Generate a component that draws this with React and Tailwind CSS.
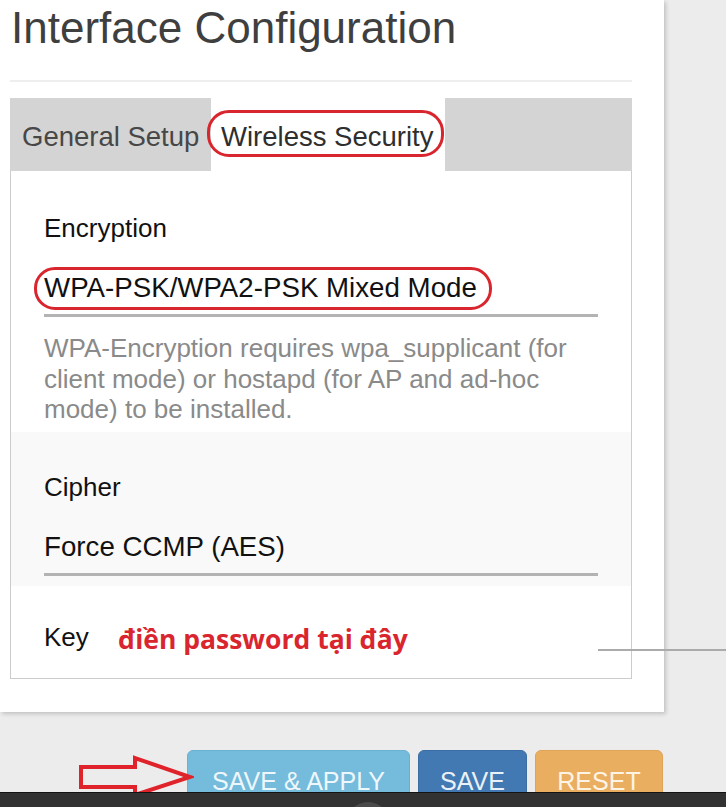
import React from "react";

export default function App() {
  return (
    <div
      className="relative w-[726px] h-[807px] overflow-hidden bg-[#ececec]"
      style={{ fontFamily: '"Liberation Sans", Arial, sans-serif' }}
    >
      {/* Card */}
      <div className="w-[664px] h-[712px] bg-white shadow-[2px_2px_4px_rgba(0,0,0,0.18)] pl-[10px] pt-[6px]">
        <h2 className="text-[44px] leading-[44px] text-[#3f3f3f] pl-[1px]">Interface Configuration</h2>
        <div className="mt-[30px] w-[622px] h-[2px] bg-[#eeeeee]" />

        <div className="mt-[16px] w-[622px]">
          {/* Tabs */}
          <div className="flex h-[73px] bg-[#d4d4d4] text-[27.5px] leading-[32px]">
            <div className="w-[201px] pl-[12px] pt-[23px] text-[#474747] whitespace-nowrap">General Setup</div>
            <div className="relative w-[234px] bg-white pl-[10px] pt-[23px] text-[#2e2e2e] whitespace-nowrap">
              Wireless Security
              <div className="absolute left-[-4px] top-[12px] w-[237px] h-[47px] rounded-[22px] border-[3px] border-[#d9262e]" />
            </div>
          </div>

          {/* Content box */}
          <div className="border-x border-b border-[#cccccc]">
            {/* Encryption */}
            <div className="bg-white pl-[33px] pt-[42px] pb-[7px]">
              <div className="text-[26px] leading-[30px] text-[#111]">Encryption</div>
              <div className="relative mt-[29px] w-[554px] border-b-[3px] border-[#b3b3b3] pb-[10px]">
                <div className="text-[27.7px] leading-[32px] text-[#111] whitespace-nowrap">WPA-PSK/WPA2-PSK Mixed Mode</div>
                <div className="absolute left-[-10px] top-[-5px] w-[458px] h-[43px] rounded-[21px] border-[3px] border-[#d9262e]" />
              </div>
              <div className="mt-[16px] w-[560px] text-[26px] leading-[30.5px] text-[#8a8a8a]">
                WPA-Encryption requires wpa_supplicant (for client mode) or hostapd (for AP and ad-hoc mode) to be installed.
              </div>
            </div>

            {/* Cipher */}
            <div className="bg-[#f9f9f9] pl-[33px] pt-[40px] pb-[10px]">
              <div className="text-[26px] leading-[30px] text-[#111]">Cipher</div>
              <div className="mt-[29px] w-[554px] border-b-[3px] border-[#b3b3b3] pb-[10px]">
                <div className="text-[27.7px] leading-[32px] text-[#111] whitespace-nowrap">Force CCMP (AES)</div>
              </div>
            </div>

            {/* Key */}
            <div className="flex h-[92px] items-center bg-white pl-[33px] pt-[11px]">
              <div className="w-[74px] text-[26px] leading-[30px] text-[#111]">Key</div>
              <div
                className="text-[26.5px] leading-[34px] font-bold text-[#d9262e] whitespace-nowrap mt-[3px]"
                style={{ fontFamily: '"Open Sans", "Noto Sans", sans-serif' }}
              >
                điền password tại đây
              </div>
            </div>
          </div>
        </div>
      </div>

      {/* Key input underline overflowing to the right */}
      <div className="absolute left-[598px] top-[649px] w-[128px] h-[2px] bg-[#ababab]" />

      {/* Buttons */}
      <div className="mt-[38px] flex gap-[8px] pl-[187px] text-[25px] leading-[30px]">
        <div className="w-[223px] h-[60px] rounded-t-[6px] bg-[#75bbdb] border border-[#69b1d3] pt-[15px] text-center text-[#eef7fb]">SAVE &amp; APPLY</div>
        <div className="w-[109px] h-[60px] rounded-t-[6px] bg-[#4379b2] border border-[#3b6ea5] pt-[15px] text-center text-[#eaf1f8]">SAVE</div>
        <div className="w-[128px] h-[60px] rounded-t-[6px] bg-[#e9ae60] border border-[#e0a456] pt-[15px] text-center text-[#fdf4e6]">RESET</div>
      </div>

      {/* Red arrow annotation */}
      <svg className="absolute left-[78px] top-[755px]" width="116" height="44" viewBox="0 0 116 44">
        <path
          d="M3 12 H57 V3 L112 22 L57 40 V32 H3 Z"
          fill="none"
          stroke="#e0232b"
          strokeWidth="4"
          strokeLinejoin="miter"
        />
      </svg>

      {/* Bottom browser bar */}
      <div className="absolute left-0 bottom-0 w-[726px] h-[15px] bg-[#323232] border-t border-[#141414] overflow-hidden">
        <div className="absolute left-[346px] top-[9px] w-[44px] h-[44px] rounded-full bg-[#4a4a4a]" />
      </div>
    </div>
  );
}
